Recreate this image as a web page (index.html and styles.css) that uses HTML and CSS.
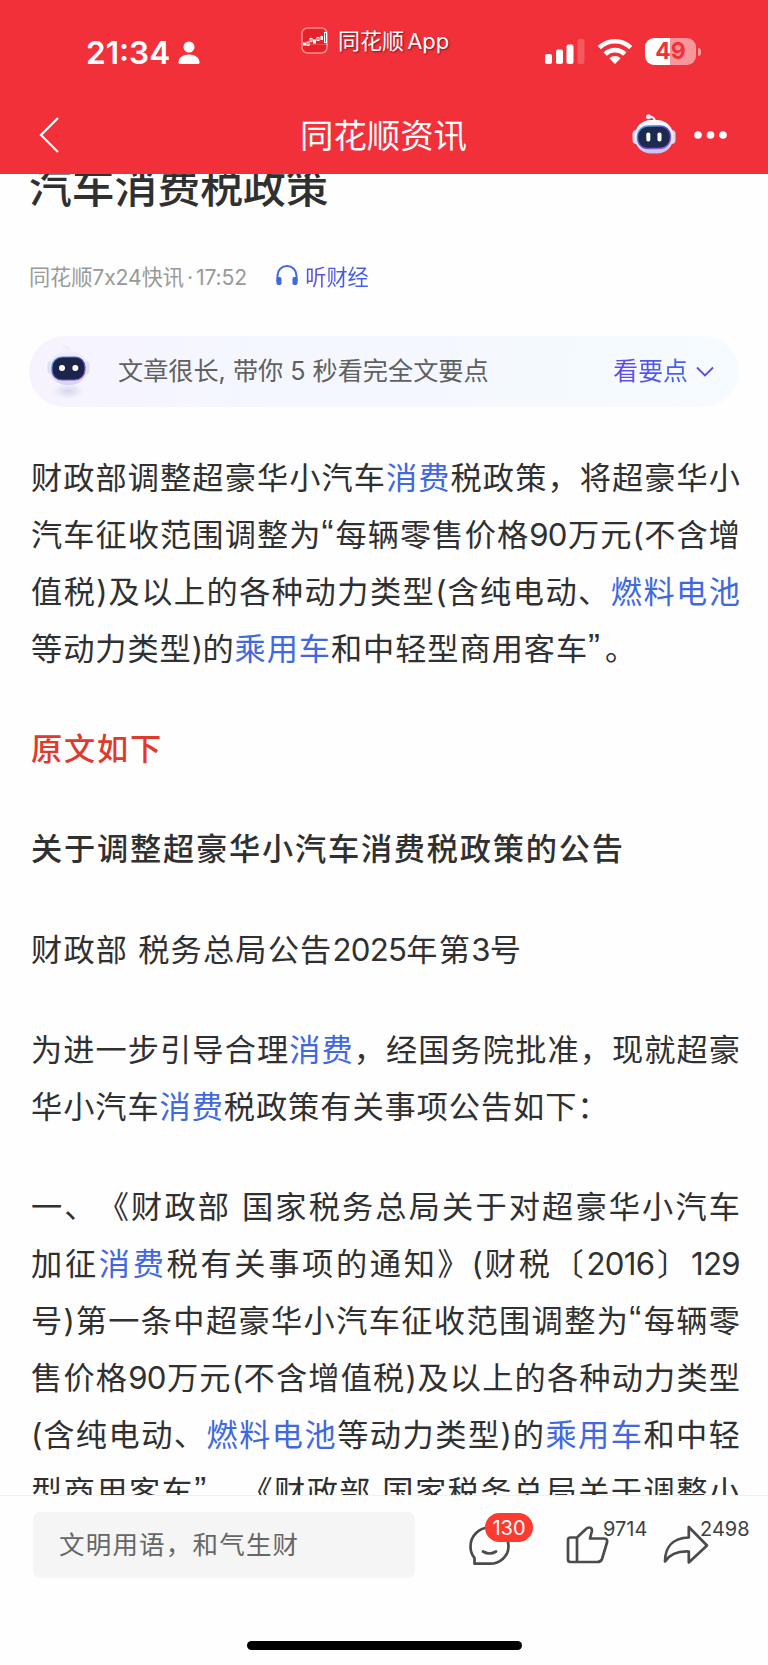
FILE: index.html
```html
<!DOCTYPE html>
<html lang="zh-CN">
<head>
<meta charset="utf-8">
<title>同花顺资讯</title>
<link rel="stylesheet" href="styles.css">
</head>
<body>
<div class="page">
  <header class="header">
    <div class="status">
      <div class="clock">21:34
        <svg class="person" width="22" height="24" viewBox="0 0 22 24"><circle cx="11" cy="6" r="5.5" fill="#fff"/><path d="M0.5 21.500C0.500 16.500 5 13.500 11 13.500S21.500 16.500 21.500 21.500Q21.500 23 20 23H2Q.5 23 .5 21.500Z" fill="#fff"/></svg>
      </div>
      <div class="island">
        <svg width="28" height="28" viewBox="0 0 28 28"><rect x="1" y="1" width="25" height="25" rx="5.500" fill="#e62129" stroke="#ff8a8d" stroke-width="1.500"/><path d="M1 17.500H27M10 9V17M13 12V18M20 8V13M24 2V18" stroke="#fff" stroke-width=".6" opacity=".3"/><g fill="#fff"><rect x="2" y="15.500" width="3" height="3"/><rect x="12" y="12.500" width="3" height="4"/><rect x="19.500" y="9" width="2.500" height="4"/></g><g fill="none" stroke="#fff"><rect x="6" y="15" width="2" height="3.500"/><rect x="9" y="11.500" width="2" height="3"/><rect x="16" y="10.500" width="2" height="3"/><rect x="23.500" y="5.500" width="2" height="10"/></g></svg>
        <span>同花顺 App</span>
      </div>
      <div class="signals">
        <svg width="40" height="26" viewBox="0 0 40 26"><g fill="#fff"><rect x="0" y="15" width="7" height="10" rx="2"/><rect x="11" y="10.500" width="7" height="14.500" rx="2"/><rect x="21.500" y="5.500" width="7" height="19.500" rx="2"/><rect x="32.500" y="0" width="7" height="25" rx="2" opacity=".2"/></g></svg>
        <svg width="36" height="26" viewBox="0 0 36 26"><g fill="none" stroke="#fff" stroke-width="4.600"><path d="M2.300 8.700A22.500 22.500 0 0 1 33.700 8.700"/><path d="M8.200 15.100A14 14 0 0 1 27.800 15.100"/></g><path d="M12.300 19.300A8.500 8.500 0 0 1 23.700 19.300L18 25Z" fill="#fff"/></svg>
        <div class="battery"><span>49</span></div>
      </div>
    </div>
    <div class="nav">
      <svg class="back" width="22" height="38" viewBox="0 0 22 38"><path d="M20 2L3 19L20 36" fill="none" stroke="#fff" stroke-width="2.200"/></svg>
      <h1>同花顺资讯</h1>
      <svg class="bot" width="44" height="40" viewBox="0 0 44 40">
        <defs><linearGradient id="shell" x1="0" y1="0" x2="0" y2="1"><stop offset="0" stop-color="#fff"/><stop offset=".6" stop-color="#e9e7fa"/><stop offset="1" stop-color="#c4c2ea"/></linearGradient><linearGradient id="rim" x1="0" y1="0" x2="1" y2="1"><stop offset="0" stop-color="#58b9ec"/><stop offset=".5" stop-color="#5a45c8"/><stop offset="1" stop-color="#b269ea"/></linearGradient></defs>
        <path d="M23 8Q23 2.500 17 2.500" fill="none" stroke="#f3ecfa" stroke-width="2"/><circle cx="16.500" cy="2.800" r="2.500" fill="#eee9fb"/>
        <rect x=".5" y="16" width="8" height="14" rx="4" fill="#d8d7f3"/><rect x="35.500" y="16" width="8" height="14" rx="4" fill="#d8d7f3"/>
        <rect x="2.500" y="6" width="39" height="33.500" rx="16.500" fill="url(#shell)"/><rect x="5.500" y="12" width="33" height="22.500" rx="10.500" fill="#1c2a50" stroke="url(#rim)" stroke-width="1.400"/>
        <rect x="14.300" y="18.500" width="4" height="9" rx="1.800" fill="#fff"/><rect x="25.500" y="18.500" width="4" height="9" rx="1.800" fill="#fff"/>
      </svg>
      <svg class="more" width="34" height="8" viewBox="0 0 34 8"><g fill="#fff"><circle cx="4" cy="4" r="3.800"/><circle cx="16.500" cy="4" r="3.800"/><circle cx="29" cy="4" r="3.800"/></g></svg>
    </div>
  </header>

  <main class="article">
    <h2 class="title">汽车消费税政策</h2>
    <div class="meta">
      <span class="source">同花顺7x24快讯<i>·</i>17:52</span>
      <svg width="22" height="21" viewBox="0 0 22 21"><path d="M1.500 17V10.500A9.500 9.500 0 0 1 20.500 10.500V17" fill="none" stroke="#4068e0" stroke-width="2"/><rect x=".5" y="12" width="5" height="8" rx="1.800" fill="#4068e0"/><rect x="16.500" y="12" width="5" height="8" rx="1.800" fill="#4068e0"/></svg>
      <span class="listen">听财经</span>
    </div>
    <div class="summary">
      <svg width="44" height="56" viewBox="0 0 44 56">
        <defs><radialGradient id="shade"><stop offset="0" stop-color="#d4d8ec"/><stop offset="1" stop-color="#d4d8ec" stop-opacity="0"/></radialGradient><linearGradient id="soft" x1="0" y1="0" x2="0" y2="1"><stop offset="0" stop-color="#f3f0fc"/><stop offset="1" stop-color="#d6d5f0"/></linearGradient></defs>
        <ellipse cx="21" cy="47" rx="16" ry="8" fill="url(#shade)"/><path d="M23 8Q21 2 16 3" fill="none" stroke="#f0eff9" stroke-width="3"/>
        <rect x=".5" y="17" width="7" height="13" rx="3.500" fill="#dcdef2"/><rect x="35.500" y="17" width="7" height="13" rx="3.500" fill="#dcdef2"/>
        <rect x="2.500" y="7" width="38" height="34" rx="17" fill="url(#soft)"/><rect x="5" y="13" width="33" height="23" rx="10" fill="#1c2449" stroke="url(#rim)" stroke-width="1.200"/><circle cx="15" cy="24" r="3" fill="#fff"/><circle cx="28.300" cy="24" r="3" fill="#fff"/>
      </svg>
      <span class="hint">文章很长, 带你 5 秒看完全文要点</span>
      <span class="expand">看要点</span>
      <svg class="down" width="18" height="12" viewBox="0 0 18 12"><path d="M1 1.500L9 9.500L17 1.500" fill="none" stroke="#6548df" stroke-width="1.800"/></svg>
    </div>
    <div class="content">
      <section>
        <p class="full">财政部调整超豪华小汽车<a>消费</a>税政策，将超豪华小</p>
        <p class="full">汽车征收范围调整为<q>“</q>每辆零售价格<b>90</b>万元<b>(</b>不含增</p>
        <p class="full">值税<b>)</b>及以上的各种动力类型<b>(</b>含纯电动、<a>燃料电池</a></p>
        <p>等动力类型<b>)</b>的<a>乘用车</a>和中轻型商用客车<q class="close">”</q>。</p>
      </section>
      <section><p class="strong red">原文如下</p></section>
      <section><p class="strong">关于调整超豪华小汽车消费税政策的公告</p></section>
      <section><p class="notice">财政部 税务总局公告<b>2025</b>年第<b>3</b>号</p></section>
      <section>
        <p class="full">为进一步引导合理<a>消费</a>，经国务院批准，现就超豪</p>
        <p>华小汽车<a>消费</a>税政策有关事项公告如下：</p>
      </section>
      <section>
        <p class="full">一、《财政部 国家税务总局关于对超豪华小汽车</p>
        <p class="full">加征<a>消费</a>税有关事项的通知》<b>(</b>财税〔<b>2016</b>〕<b>129</b></p>
        <p class="full">号<b>)</b>第一条中超豪华小汽车征收范围调整为<q>“</q>每辆零</p>
        <p class="full">售价格<b>90</b>万元<b>(</b>不含增值税<b>)</b>及以上的各种动力类型</p>
        <p class="full"><b>(</b>含纯电动、<a>燃料电池</a>等动力类型<b>)</b>的<a>乘用车</a>和中轻</p>
        <p class="full">型商用客车<q>”</q>。《财政部 国家税务总局关于调整小</p>
      </section>
    </div>
  </main>

  <footer class="footer">
    <div class="bar">
      <div class="comment">文明用语，和气生财</div>
      <div class="action chat">
        <svg width="44" height="42" viewBox="0 0 44 42"><path d="M5.500 38.500V33C2.500 29.500 1.500 26 1.500 21.500A19 19 0 0 1 39.500 21.500C39.500 31 31 38.700 21 38.700H5.500Z" fill="none" stroke="#4b4b4b" stroke-width="2.700" stroke-linejoin="round"/><path d="M14 26.500Q20.500 30.500 27 26.500" fill="none" stroke="#4b4b4b" stroke-width="2.700" stroke-linecap="round"/></svg>
        <span class="badge">130</span>
      </div>
      <div class="action like">
        <svg width="44" height="40" viewBox="0 0 44 40"><path d="M11 12.500H4.500Q2 12.500 2 15V34.500Q2 37 4.500 37H31Q35 37 36 34L41 17.500Q42 13.500 38 13.500H24L25.800 6.500Q26.500 2.500 23 2.500Q21.500 2.500 20 4L11 12.500V37" fill="none" stroke="#4b4b4b" stroke-width="2.700" stroke-linejoin="round"/></svg>
        <span class="count">9714</span>
      </div>
      <div class="action share">
        <svg width="46" height="40" viewBox="0 0 46 40"><path d="M25.800 2V12.500C9 13 2 23 2 36.500C7 29 14 26 25.800 26.500V37.500L44 20.500Z" fill="none" stroke="#4b4b4b" stroke-width="2.700" stroke-linejoin="round"/></svg>
        <span class="count">2498</span>
      </div>
    </div>
    <div class="home"></div>
  </footer>
</div>
</body>
</html>
```

FILE: styles.css
```css
* { box-sizing: border-box; }
body { margin: 0; background: #fff; font-family: Inter, "Noto Sans CJK SC", sans-serif; text-spacing-trim: space-all; }
h1, h2, p { margin: 0; font-weight: 400; }
svg { display: block; flex: none; }
.page { width: 768px; height: 1665px; display: flex; flex-direction: column; overflow: hidden; background: #fefefe; }

.header { flex: none; height: 174px; background: #f23039; color: #fff; display: flex; flex-direction: column; }
.status { height: 96px; display: flex; padding-left: 86px; }
.clock { width: 215px; padding-top: 33px; display: flex; align-items: flex-start; gap: 8px; font-size: 31.600px; line-height: 40px; font-weight: 600; }
.person { margin-top: 8px; }
.island { width: 244px; display: flex; align-items: flex-start; padding-top: 27px; gap: 9px; font-size: 22px; line-height: 28px; white-space: nowrap; word-spacing: -3px; text-shadow: 1px 1px 2px #8a1218; }
.signals { display: flex; align-items: flex-start; padding-top: 39px; gap: 12px; }
.battery { margin-top: -1px; position: relative; width: 51px; height: 27px; border-radius: 9px; background: linear-gradient(90deg, #fff 50%, #f8979b 50%); color: #f23039; font-size: 23px; font-weight: 700; line-height: 27px; text-align: center; }
.battery::after { content: ""; position: absolute; left: 53px; top: 10px; width: 3px; height: 8px; border-radius: 0 4px 4px 0; background: #f8979b; }
.nav { flex: 1; display: flex; align-items: flex-start; padding: 20px 0 0 38px; }
.nav h1 { width: 206px; margin: -4px 0 0 240px; font-size: 33.400px; line-height: 48px; white-space: nowrap; }
.bot { margin: -2px 0 0 126px; }
.more { margin: 15px 0 0 18px; }

.article { flex: 1; min-height: 0; overflow: hidden; }
.title { margin: -16px 0 0 29px; font-size: 42.800px; line-height: 60px; font-weight: 500; color: #303030; }
.meta { display: flex; align-items: center; height: 34px; margin: 40px 0 0 29px; font-size: 21.200px; color: #999; white-space: nowrap; }
.source { letter-spacing: -.1px; }
.source i { font-style: normal; margin: 0 3px; }
.meta svg { margin: 0 7px 0 29px; }
.listen { background: linear-gradient(90deg, #5950e5, #4060e8); background-clip: text; color: transparent; }
.summary { margin: 44px 29px 0; height: 71px; border-radius: 36px; background: linear-gradient(100deg, #f7f3fe, #f4f7fe 35%, #f5fbff); display: flex; align-items: center; padding: 0 25px 0 18px; white-space: nowrap; }
.hint { margin: -6px 0 0 27px; color: #606060; flex: 1; font-size: 25.150px; }
.expand { margin-top: -6px; font-size: 24.900px; background: linear-gradient(90deg, #6548df, #3f62f5); background-clip: text; color: transparent; }
.down { margin-left: 8px; }
.content { margin: 43px 28px 0 31px; }
.content section { margin-bottom: 43px; color: #303030; font-size: 31.200px; line-height: 57.100px; }
.content p { height: 57.100px; white-space: nowrap; letter-spacing: .95px; }
.content .notice { letter-spacing: 1.200px; }
.content .full { text-align-last: justify; letter-spacing: 0; }
.content a { color: #4068e0; }
.content b { font-weight: 400; letter-spacing: -.7px; }
.content q { quotes: none; font-family: "Liberation Sans", sans-serif; font-size: 36px; line-height: 1; letter-spacing: 1px; }
.content q::before, .content q::after { content: none; }
.content .close { letter-spacing: 5px; }
.content .strong { font-weight: 500; letter-spacing: 1.800px; }
.content .red { color: #e03a2c; }

.footer { flex: none; height: 170px; border-top: 1px solid #f0f0f0; background: #fefefe; }
.bar { display: flex; align-items: flex-start; padding: 16px 0 0 33px; }
.comment { width: 382px; height: 66px; border-radius: 8px; background: #f5f5f5; color: #666; font-size: 25.500px; letter-spacing: 1.200px; line-height: 66px; padding-left: 26px; }
.action { position: relative; margin-top: 13px; }
.chat { margin-left: 54px; }
.like { margin-left: 53px; }
.share { margin-left: 53px; }
.badge { position: absolute; left: 16px; top: -12px; width: 48px; height: 29px; border-radius: 15px; background: #fc3b30; color: #fff; font-size: 20px; line-height: 30px; text-align: center; }
.count { position: absolute; left: 37px; top: -8px; font-size: 20px; line-height: 24px; color: #404040; }
.home { width: 275px; height: 9px; border-radius: 5px; background: #000; margin: 63px auto 0; }
```
